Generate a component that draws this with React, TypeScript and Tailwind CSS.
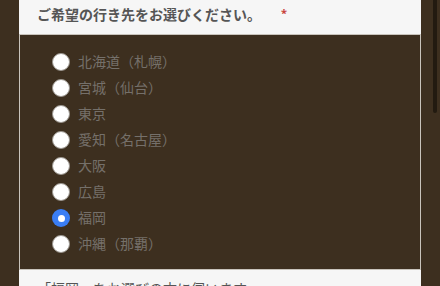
import React from "react";

const options = [
  "北海道（札幌）",
  "宮城（仙台）",
  "東京",
  "愛知（名古屋）",
  "大阪",
  "広島",
  "福岡",
  "沖縄（那覇）",
];

function Radio({ checked }: { checked: boolean }) {
  if (checked) {
    return (
      <span className="flex h-[18px] w-[18px] items-center justify-center rounded-full bg-[#3a7ef5]">
        <span className="h-[7px] w-[7px] rounded-full bg-white" />
      </span>
    );
  }
  return <span className="h-[18px] w-[18px] rounded-full border border-[#9a958e] bg-white" />;
}

export default function App() {
  const selected = "福岡";
  return (
    <div
      className="flex h-[286px] w-[440px] overflow-hidden bg-[#3d2f1f]"
      style={{ fontFamily: '"Noto Sans", "Noto Sans CJK JP", sans-serif' }}
    >
      <div className="w-[19px] shrink-0" />
      <main className="w-[402px] shrink-0 bg-[#f6f6f6]">
        <div className="flex h-[34px] items-start pl-[18px] pt-[5px]">
          <h2 className="text-[14px] font-bold leading-[20px] text-[#555]">
            ご希望の行き先をお選びください。
          </h2>
          <span className="ml-[20px] mt-[0px] text-[11px] font-bold text-[#c8413a]">*</span>
        </div>
        <div className="border border-[#c9c4bc] bg-[#3d2f1f] pb-[12px] pt-[14px]">
          {options.map((o) => (
            <label key={o} className="flex h-[26px] items-center pl-[32px]">
              <Radio checked={o === selected} />
              <span className="ml-[8px] text-[14px] leading-[20px] text-[#75706a]">{o}</span>
            </label>
          ))}
        </div>
        <p className="pl-[18px] pt-[9px] text-[14px] leading-[20px] text-[#555]">
          「福岡」をお選びの方に伺います。
        </p>
      </main>
      <div className="relative flex-1">
        <div className="absolute left-[12px] top-0 h-[113px] w-[4px] rounded-b-full bg-[#221a10]" />
      </div>
    </div>
  );
}
